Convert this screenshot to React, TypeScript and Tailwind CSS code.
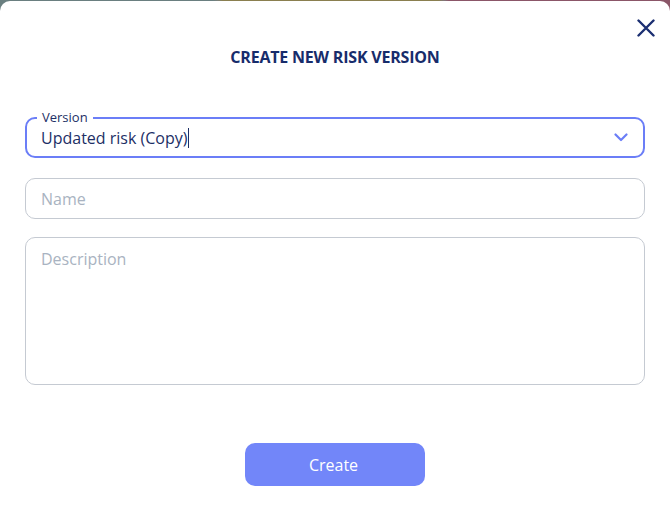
import React from "react";

export default function App() {
  return (
    <div
      className="w-[670px] h-[511px] overflow-hidden bg-[linear-gradient(90deg,#6a7f80_0px,#6a7f80_213px,#7d817a_218px,#8a7f4f_223px,#8a7f4f_438px,#80777a_444px,#8b5668_449px,#8b5668_670px)]"
      style={{ fontFamily: '"Open Sans", "Noto Sans", sans-serif' }}
    >
      <div className="mt-[1px] h-[520px] bg-white rounded-[10px] flex flex-col">
        <div className="flex justify-end pt-[18px] pr-[15px] h-[38px]">
          <svg width="18" height="18" viewBox="0 0 18 18" className="text-[#1b2f72]">
            <path d="M1.5 1.5 L16.5 16.5 M16.5 1.5 L1.5 16.5" stroke="currentColor" strokeWidth="2.4" strokeLinecap="round" />
          </svg>
        </div>
        <h1 className="text-center text-[16px] font-bold text-[#172c6b] tracking-[-0.2px] leading-[20px] mt-[8px]">
          CREATE NEW RISK VERSION
        </h1>
        <div className="px-[25px] mt-[50px] flex flex-col">
          <div className="relative h-[41px] border-2 border-[#6b7ef7] rounded-[10px] flex items-center pl-[14px] pr-[14px]">
            <span className="absolute -top-[10px] left-[10px] bg-white px-[5px] text-[13px] leading-[16px] text-[#1d2f66]">
              Version
            </span>
            <span className="text-[16px] text-[#1d2f66] leading-[22px] flex items-center">
              Updated risk (Copy)
              <span className="inline-block w-[1px] h-[20px] bg-[#1d2f66] ml-[1px]" />
            </span>
            <svg width="14" height="9" viewBox="0 0 14 9" className="ml-auto mr-[1px]">
              <path d="M1.5 1.5 L7 7 L12.5 1.5" fill="none" stroke="#6b7ef7" strokeWidth="2.2" strokeLinecap="round" strokeLinejoin="round" />
            </svg>
          </div>
          <div className="mt-[20px] h-[41px] border border-[#c5cad2] rounded-[10px] flex items-center pl-[15px]">
            <span className="text-[16px] text-[#a9b3c1] leading-[22px]">Name</span>
          </div>
          <div className="mt-[18px] h-[148px] border border-[#c5cad2] rounded-[10px] pl-[15px] pt-[9px]">
            <span className="text-[16px] text-[#a9b3c1] leading-[22px]">Description</span>
          </div>
          <div className="flex justify-center mt-[58px]">
            <button className="w-[180px] h-[43px] rounded-[10px] bg-[#7286f9] text-white text-[16px] pr-[3px]">
              Create
            </button>
          </div>
        </div>
      </div>
    </div>
  );
}
